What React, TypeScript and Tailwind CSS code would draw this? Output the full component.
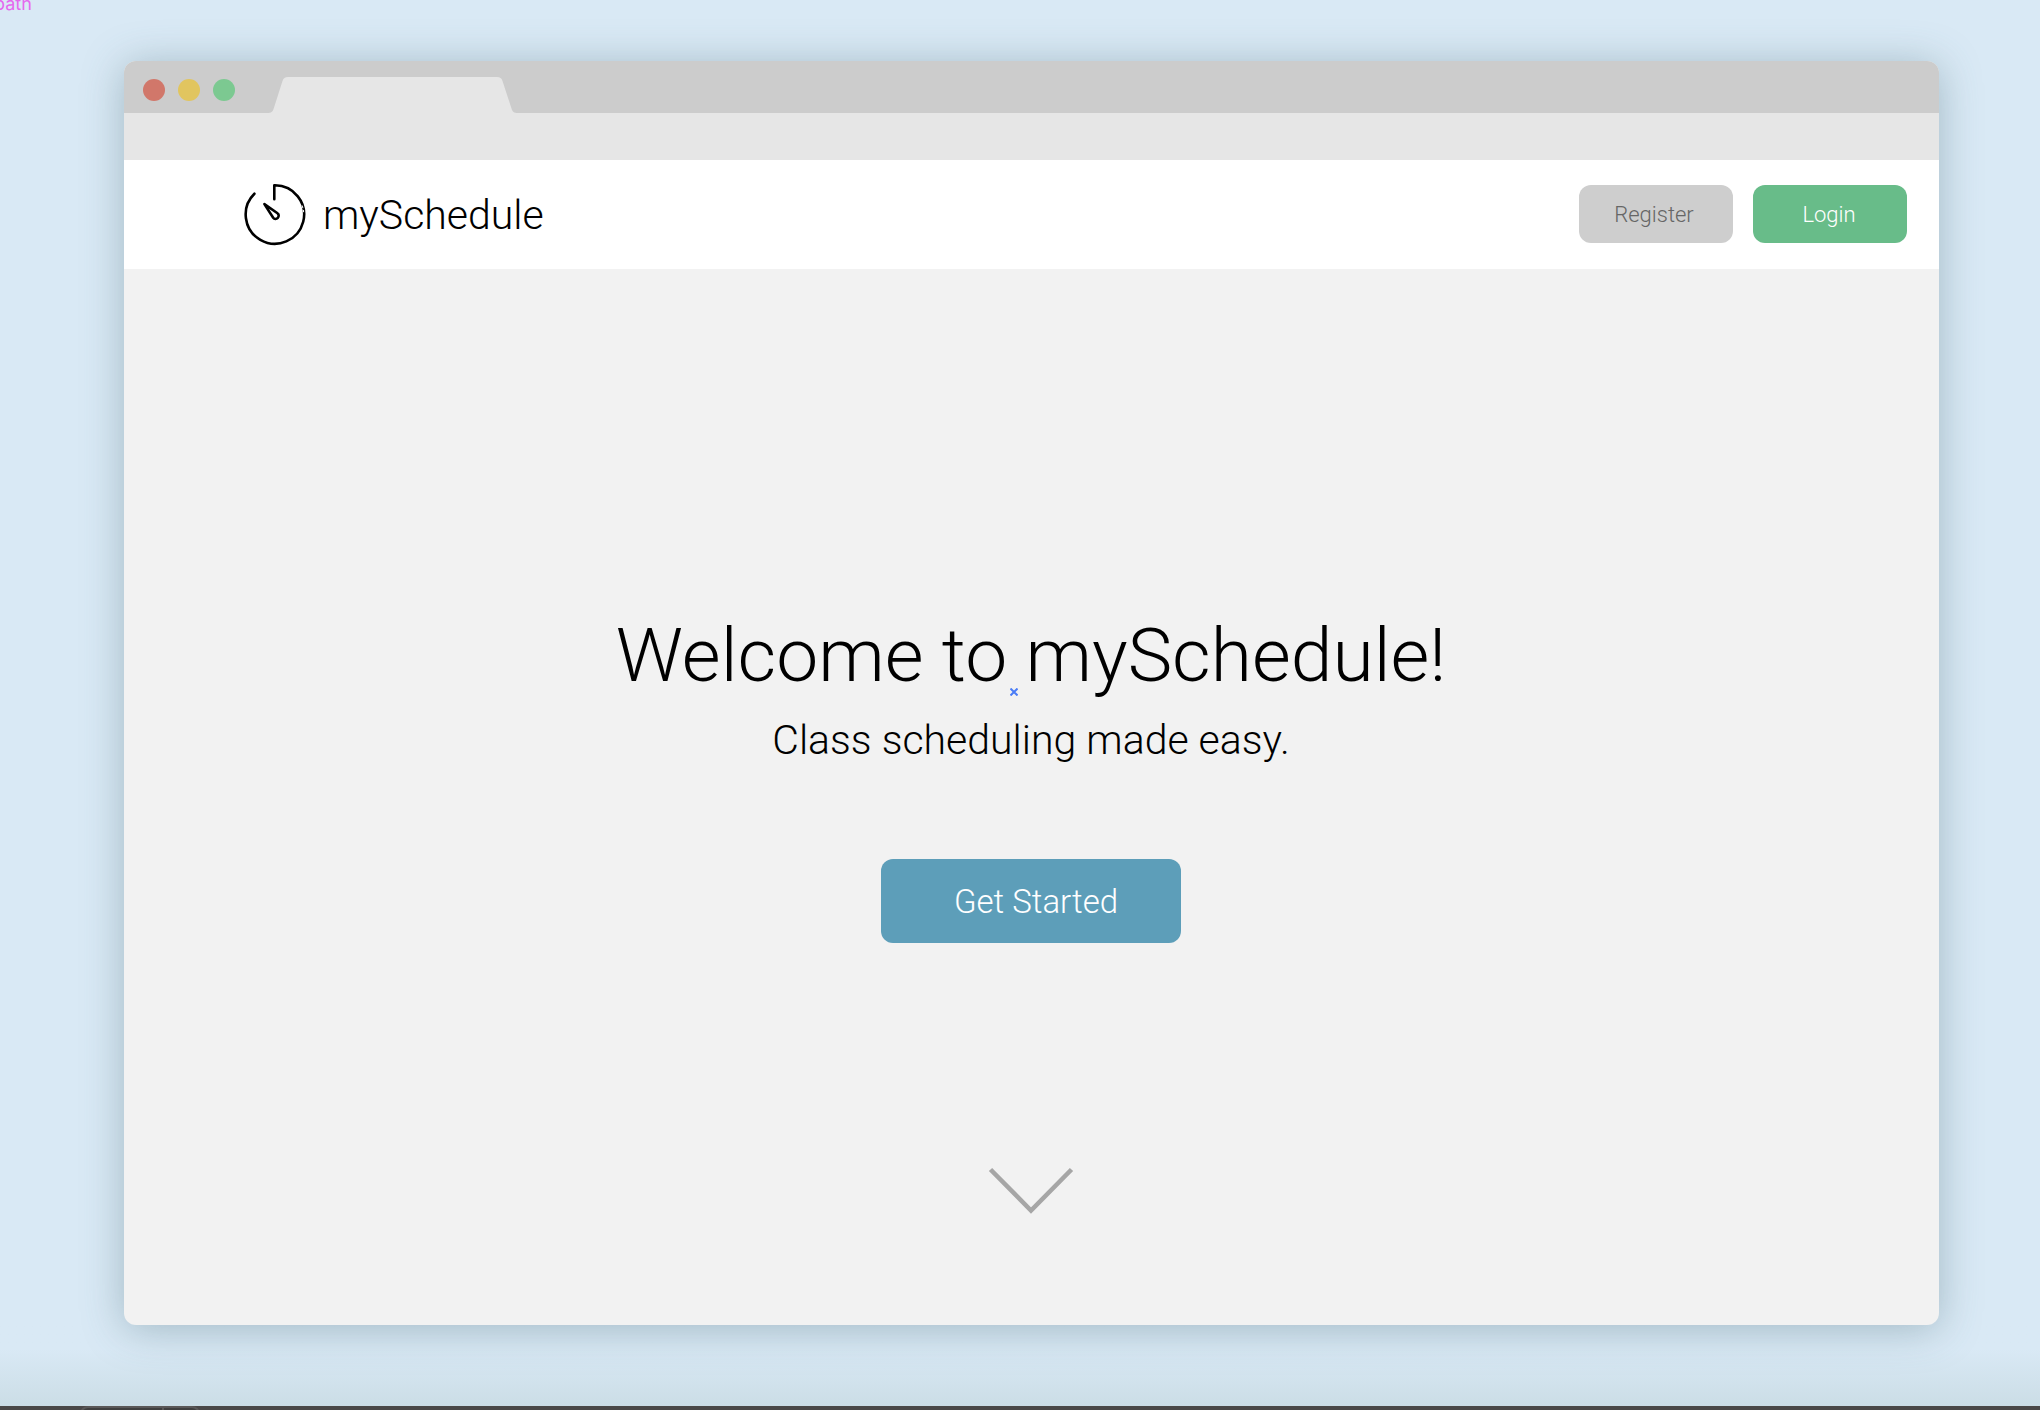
function Logo() {
  return (
    <svg viewBox="0 0 64 64" className="size-16" fill="none" stroke="#000" strokeWidth="2.6" strokeLinecap="round" strokeLinejoin="round" aria-hidden="true">
      <path d="M32.300 16.300V2.300A29.200 29.200 0 1 1 12.400 10.700" />
      <path d="M22.400 21.100L31.200 34.700C32.300 36.300 34.500 36.300 35.800 34.900C37.100 33.500 37 31.300 35.500 30.300Z" />
      <path d="M60.200 22.800L60.800 24.800M61.400 27.300L61.600 28.800" stroke="#fff" strokeWidth="1" />
    </svg>
  );
}

function TitleBar() {
  return (
    <div className="flex h-[52px] items-end bg-[#cccccc] pl-[19px]">
      <div className="flex gap-[13px] pb-3">
        <span className="size-[22px] rounded-full bg-[#d1776a]" />
        <span className="size-[22px] rounded-full bg-[#e1c55f]" />
        <span className="size-[22px] rounded-full bg-[#7cc991]" />
      </div>
      <svg viewBox="0 0 254 36" className="ml-8 h-9 w-[254px]" fill="#e6e6e6" aria-hidden="true">
        <path d="M0 36C4.500 36 5.500 35 6.700 31.500L15.500 4C16.500 1 18 0 21 0H230C233 0 234.500 1 235.500 4L244.500 31.500C245.700 35 246.700 36 251 36Z" />
      </svg>
    </div>
  );
}

export default function App() {
  return (
    <div className="relative flex min-h-screen flex-col bg-[#d9e9f5] font-[Roboto,sans-serif] font-light text-black">
      <span className="absolute -left-1.5 -top-2 font-[Inter,sans-serif] text-lg font-normal leading-6 text-[#e569ee]">path</span>
      <main className="flex flex-1 flex-col pl-[124px] pr-[101px] pt-[61px]">
        <section className="z-10 flex flex-1 flex-col overflow-hidden rounded-xl bg-[#f2f2f2] shadow-[0_4px_42px_rgba(70,105,115,0.38)]">
          <TitleBar />
          <div className="h-[47px] bg-[#e6e6e6]" />
          <header className="flex h-[109px] items-center justify-between bg-white pl-[118px] pr-8">
            <a href="#" className="flex items-center gap-[17px]">
              <Logo />
              <span className="text-[41px] leading-[48px]">mySchedule</span>
            </a>
            <nav className="flex gap-5 pb-0.5">
              <button className="h-[58px] w-[154px] rounded-xl bg-[#cecece] pr-1 pt-0.5 text-[22px] text-[#666]">Register</button>
              <button className="h-[58px] w-[154px] rounded-xl bg-[#68bc89] pr-0.5 pt-0.5 text-[22px] text-white">Login</button>
            </nav>
          </header>
          <div className="flex flex-1 flex-col items-center pr-px pt-[342px]">
            <h1 className="relative text-[75px] leading-[88px]">
              Welcome to mySchedule!
              <svg viewBox="0 0 8 8" className="absolute bottom-[3px] left-[47.500%] size-2" stroke="#4a7cf6" strokeWidth="2" aria-hidden="true">
                <path d="M.5.5l7 7M7.500.5l-7 7" />
              </svg>
            </h1>
            <p className="mt-[17px] text-[41px] leading-[48px]">Class scheduling made easy.</p>
            <button className="mt-[95px] h-[84px] w-[300px] rounded-xl bg-[#5d9eb9] pl-2.5 pt-0.5 text-[33px] text-white">Get Started</button>
            <a href="#more" aria-label="Scroll down" className="mt-[224px]">
              <svg viewBox="0 0 86 48" className="h-12 w-[86px]" fill="none" stroke="#a6a6a6" strokeWidth="4.6" aria-hidden="true">
                <path d="M2.500 2.500L43 43.500L83.500 2.500" />
              </svg>
            </a>
          </div>
        </section>
      </main>
      <div className="h-[81px] bg-linear-to-b from-[#d9e9f5] from-30% to-[#cbdde6]" />
      <footer className="flex h-1 overflow-hidden bg-[#4a4848] pl-20">
        <div className="h-4 w-[120px] rounded-lg border-2 border-[#5a5858] bg-[#403f3f]">
          <div className="h-4 w-[82px] border-r-2 border-[#5a5858]" />
        </div>
      </footer>
    </div>
  );
}
